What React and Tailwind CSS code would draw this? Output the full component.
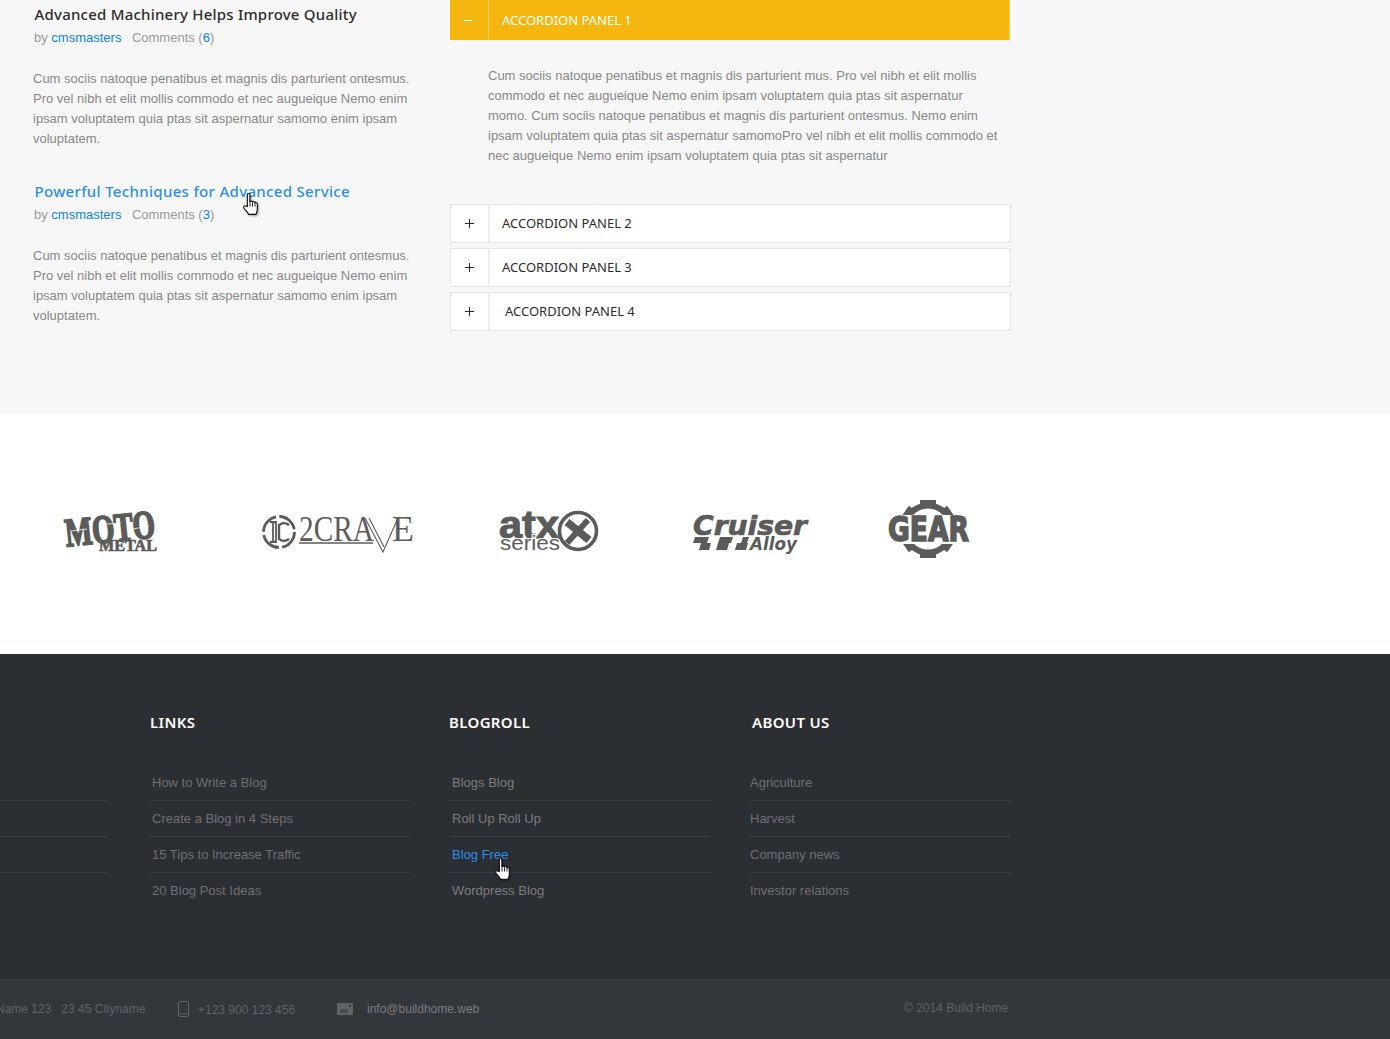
import React from "react";

const sans = "font-['Liberation_Sans',Arial,sans-serif]";
const head = "font-['Noto_Sans',sans-serif]";
const lorem = "Cum sociis natoque penatibus et magnis dis parturient ontesmus. Pro vel nibh et elit mollis commodo et nec augueique Nemo enim ipsam voluptatem quia ptas sit aspernatur samomo enim ipsam voluptatem.";

function Hand({ className }) {
  return (
    <svg className={`${className} drop-shadow-[1px_1px_1px_rgba(0,0,0,0.35)]`} width="19" height="25" viewBox="0 0 18 24">
      <path d="M5 14V2.6C5 1 7.4 1 7.4 2.6V9.5C7.6 8.4 9.8 8.4 10 9.8C10.2 8.8 12.2 8.9 12.4 10.4C12.8 9.6 14.6 10 14.6 11.6V16.5C14.6 18.5 13.8 19.5 13.4 21.5H6.2C5.6 19.6 3.6 18 1.8 15.6C0.6 14 2.4 12.6 3.6 13.6Z" fill="#fff" stroke="#111" strokeWidth="1.1" strokeLinejoin="round" />
      <path d="M7.6 10V14M10 10V14M12.4 10.5V14" stroke="#111" strokeWidth="0.9" fill="none" />
    </svg>
  );
}

function PlusIcon() {
  return (
    <svg width="9" height="9" viewBox="0 0 9 9" className="block">
      <path d="M0 4.5H9M4.5 0V9" stroke="#2a2a2a" strokeWidth="1" fill="none" />
    </svg>
  );
}

function Post({ title, count, active }) {
  return (
    <article>
      <h3 className={`${head} ml-[1.5px] text-[15px] leading-[22px] font-medium whitespace-nowrap ${active ? "text-[#2b8fe8] tracking-[0.32px]" : "text-[#2c2c2c] tracking-[0.22px]"}`}>{title}</h3>
      <p className={`${sans} ml-[1px] mt-[3px] text-[13px] leading-[20px] text-[#999]`}>
        by <span className="text-[#0a84e8]">cmsmasters</span>
        <span className="ml-[10.5px]">Comments (<span className="text-[#0a84e8]">{count}</span>)</span>
      </p>
      <p className={`${sans} mt-[21px] text-[13px] leading-[20px] text-[#888]`}>{lorem}</p>
    </article>
  );
}

function Panel({ n, shift }) {
  return (
    <div className="h-[39px] flex items-stretch bg-white border border-[#e8e8e8]">
      <div className="w-[39px] flex items-center justify-center border-r-2 border-[#eeeeee]">
        <PlusIcon />
      </div>
      <div className={`${head} flex items-center text-[13px] text-[#2c2c2c] ${shift ? "pl-[15px]" : "pl-[12px]"}`}>ACCORDION PANEL {n}</div>
    </div>
  );
}

function FooterCol({ title, items, className = "", titleClass = "", itemClass = "", color = "text-[#6e7074]" }) {
  return (
    <div className={className}>
      <h4 className={`${head} text-[15px] leading-[20px] font-semibold tracking-[0.35px] text-white h-[20px] ${titleClass}`}>{title}</h4>
      <ul className="mt-[33px]">
        {items.map((it, i) => (
          <li key={it.t} className={`${sans} h-[36px] flex items-center text-[13px] ${itemClass} ${i < items.length - 1 ? "border-b border-[#3a3d42]" : ""} ${it.c || color}`}>
            {it.t}
          </li>
        ))}
      </ul>
    </div>
  );
}

const L = (arr) => arr.map((t) => ({ t }));

function LogoMoto() {
  return (
    <svg width="96" height="44" viewBox="0 0 96 44" className="block overflow-visible">
      <g fill="#5b5b5b" fontFamily="'Liberation Serif',serif" fontWeight="700">
        <text x="2" y="33" fontSize="40" textLength="90" lengthAdjust="spacingAndGlyphs" transform="rotate(-6 46 20)" stroke="#5b5b5b" strokeWidth="2">MOTO</text>
        <path d="M8 22l16-2M44 15l14-1M70 20l16-3" stroke="#fff" strokeWidth="0.8" fill="none" />
        <text x="36" y="42" fontSize="17" textLength="58" lengthAdjust="spacingAndGlyphs" stroke="#5b5b5b" strokeWidth="0.7">METAL</text>
      </g>
    </svg>
  );
}

function Logo2Crave() {
  return (
    <svg width="154" height="44" viewBox="0 0 154 44" className="block overflow-visible">
      <g fill="none" stroke="#5b5b5b">
        <circle cx="18" cy="20" r="15.5" strokeWidth="2.8" strokeDasharray="21 3.3" />
        <path d="M9 10h6v20H9M12 10v20" strokeWidth="1.8" />
        <path d="M28 13a8 8 0 0 0-10 0v14a8 8 0 0 0 10 0" strokeWidth="2.4" />
        <path d="M38 31H112" strokeWidth="1.4" />
        <path d="M104 6l18 34 15-34M108 6l15 29" strokeWidth="1.1" />
      </g>
      <g fill="#5b5b5b" fontFamily="'Liberation Serif',serif">
        <text x="38" y="29" fontSize="36" textLength="75" lengthAdjust="spacingAndGlyphs">2CRA</text>
        <text x="131" y="29" fontSize="36" textLength="22" lengthAdjust="spacingAndGlyphs">E</text>
      </g>
    </svg>
  );
}

function LogoAtx() {
  return (
    <svg width="102" height="44" viewBox="0 0 102 44" className="block overflow-visible">
      <g fill="#5b5b5b" fontFamily="'Liberation Sans',sans-serif" fontWeight="700">
        <text x="1" y="26" fontSize="38" textLength="60" lengthAdjust="spacingAndGlyphs" stroke="#5b5b5b" strokeWidth="1">atx</text>
        <text x="2" y="38" fontSize="20" textLength="60" lengthAdjust="spacingAndGlyphs" fontWeight="400" stroke="#fff" strokeWidth="2" paintOrder="stroke">series</text>
      </g>
      <circle cx="80" cy="19" r="18.5" fill="none" stroke="#5b5b5b" strokeWidth="3.6" />
      <path d="M69 10L91 28" stroke="#5b5b5b" strokeWidth="8" />
      <path d="M90 8L69 31" stroke="#5b5b5b" strokeWidth="6" />
    </svg>
  );
}

function LogoCruiser() {
  return (
    <svg width="116" height="44" viewBox="0 0 116 44" className="block overflow-visible">
      <g fill="#5b5b5b" fontFamily="'DejaVu Sans',sans-serif" fontWeight="700" fontStyle="italic">
        <text x="1" y="23" fontSize="27" textLength="114" lengthAdjust="spacingAndGlyphs" stroke="#5b5b5b" strokeWidth="0.7">Cruiser</text>
        <text x="58" y="38" fontSize="17" textLength="47" lengthAdjust="spacingAndGlyphs">Alloy</text>
      </g>
      <path fill="#5b5b5b" d="M3 25h14l-2 6H1zM28 25h13l-2 6H26zM51 25h6l-2 6h-6zM9 31h10l-2 7H7zM26 31h11l-2 7H24zM45 31h11l-2 7H43z" />
    </svg>
  );
}

function LogoGear() {
  return (
    <svg width="84" height="60" viewBox="0 0 84 60" className="block overflow-visible">
      <circle cx="41" cy="29" r="23.5" fill="none" stroke="#5b5b5b" strokeWidth="6" />
      <g fill="#5b5b5b">
        {[0, 55, -55, 180, 125, -125].map((a) => (
          <rect key={a} x="33" y="0" width="16" height="8" transform={`rotate(${a} 41 29)`} />
        ))}
      </g>
      <rect x="0" y="15" width="84" height="29" fill="#fff" />
      <text x="1" y="41" fill="#5b5b5b" fontFamily="'DejaVu Sans',sans-serif" fontWeight="700" fontSize="33" textLength="81" lengthAdjust="spacingAndGlyphs" stroke="#5b5b5b" strokeWidth="1.6">GEAR</text>
    </svg>
  );
}

export default function App() {
  return (
    <div className="w-[1390px] h-[1039px] overflow-hidden bg-white relative">
      <section className="h-[414px] bg-[#f7f7f7] flex items-start">
        <div className="w-[377px] ml-[33px] pt-[3px] flex flex-col gap-[31px] relative">
          <Post title="Advanced Machinery Helps Improve Quality" count="6" />
          <Post title="Powerful Techniques for Advanced Service" count="3" active />
          <Hand className="absolute left-[209px] top-[192px]" />
        </div>
        <div className="w-[561px] ml-[40px]">
          <div className="h-[40px] w-[560px] flex items-stretch bg-[#f5b70f] border-r border-[#f8cf5e]">
            <div className="w-[39px] flex items-center justify-center border-r border-[#f8cf5e]">
              <svg width="10" height="3" viewBox="0 0 10 3" className="block mr-[2px]">
                <path d="M0 1.5H10" stroke="#fff" strokeWidth="1" />
              </svg>
            </div>
            <div className={`${head} flex items-center pl-[13px] pt-[1px] text-[13px] text-white`}>ACCORDION PANEL 1</div>
          </div>
          <p className={`${sans} ml-[38px] mr-[10px] mt-[26px] h-[138px] text-[13px] leading-[20px] text-[#888]`}>
            Cum sociis natoque penatibus et magnis dis parturient mus. Pro vel nibh et elit mollis commodo et nec augueique Nemo enim ipsam voluptatem quia ptas sit aspernatur momo. Cum sociis natoque penatibus et magnis dis parturient ontesmus. Nemo enim ipsam voluptatem quia ptas sit aspernatur samomoPro vel nibh et elit mollis commodo et nec augueique Nemo enim ipsam voluptatem quia ptas sit aspernatur
          </p>
          <div className="flex flex-col gap-[5px]">
            <Panel n="2" />
            <Panel n="3" />
            <Panel n="4" shift />
          </div>
        </div>
      </section>

      <section className="h-[240px] bg-white flex items-center">
        <div className="ml-[63px] mt-[-6px] w-[198px]"><LogoMoto /></div>
        <div className="w-[237px]"><Logo2Crave /></div>
        <div className="w-[194px]"><LogoAtx /></div>
        <div className="w-[195px]"><LogoCruiser /></div>
        <div className="mt-[-8px]"><LogoGear /></div>
      </section>

      <section className="h-[325px] bg-[#2b2e33] pt-[58px] flex items-start">
        <div className="w-[259px] ml-[-151px] mt-[53px]">
          <div className="h-[36px] border-b border-[#3a3d42]" />
          <div className="h-[36px] border-b border-[#3a3d42]" />
          <div className="h-[36px] border-b border-[#3a3d42]" />
        </div>
        <FooterCol className="w-[259px] ml-[42px]" itemClass="pl-[2px]" title="LINKS" items={L(["How to Write a Blog", "Create a Blog in 4 Steps", "15 Tips to Increase Traffic", "20 Blog Post Ideas"])} />
        <FooterCol className="w-[262px] ml-[40px]" itemClass="pl-[3px]" color="text-[#7b7d81]" title="BLOGROLL" items={[{ t: "Blogs Blog" }, { t: "Roll Up Roll Up" }, { t: "Blog Free", c: "text-[#2b8fe8]" }, { t: "Wordpress Blog" }]} />
        <FooterCol className="w-[261px] ml-[39px]" titleClass="pl-[2px]" title="ABOUT US" items={L(["Agriculture", "Harvest", "Company news", "Investor relations"])} />
      </section>

      <section className={`${sans} h-[60px] bg-[#33363b] flex items-center text-[12px] text-[#5f6266]`}>
        <span className="ml-[-4px] whitespace-nowrap w-[182px]">Name 123 &nbsp; 23 45 Cityname</span>
        <svg width="11" height="16" viewBox="0 0 11 16" className="block">
          <rect x="0.5" y="0.5" width="10" height="15" rx="1" fill="none" stroke="#5f6266" />
          <path d="M0.5 13h10" stroke="#5f6266" />
        </svg>
        <span className="ml-[9px] mt-[2px] w-[139px] whitespace-nowrap">+123 900 123 456</span>
        <svg width="16" height="12" viewBox="0 0 16 12" className="block">
          <rect width="16" height="12" fill="#5f6266" />
          <path d="M3 7h8M3 9h8" stroke="#33363b" />
          <rect x="12" y="2" width="2" height="2" fill="#33363b" />
        </svg>
        <span className="ml-[14px] w-[537px] text-[#7a7c80] whitespace-nowrap">info@buildhome.web</span>
        <span className="whitespace-nowrap mb-[2px]">© 2014 Build Home</span>
      </section>

      <Hand className="absolute left-[494px] top-[857px]" />
    </div>
  );
}
